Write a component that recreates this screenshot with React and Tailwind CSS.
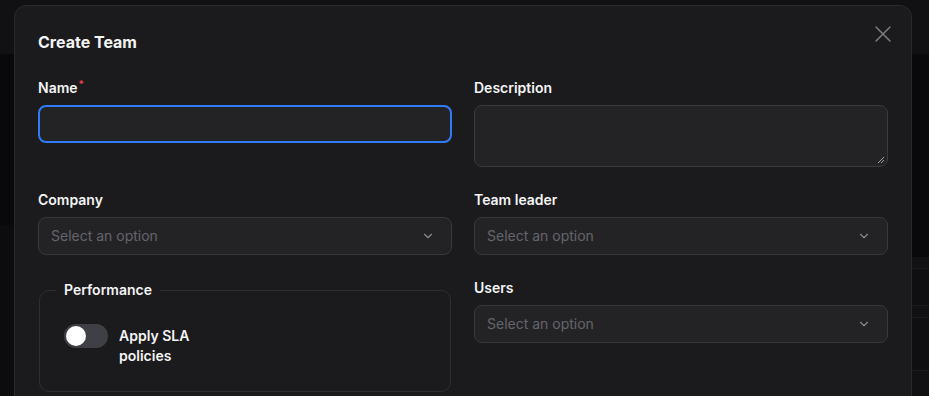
import React from "react";

function Chevron() {
  return (
    <svg width="14" height="14" viewBox="0 0 24 24" fill="none" stroke="#8a8a91" strokeWidth="2" strokeLinecap="round" strokeLinejoin="round">
      <path d="m6 9 6 6 6-6" />
    </svg>
  );
}

function Select() {
  return (
    <div className="flex h-[38px] items-center justify-between rounded-lg border border-[#38383d] bg-[#232326] pl-3 pr-4">
      <span className="text-sm text-[#65656c]">Select an option</span>
      <Chevron />
    </div>
  );
}

function Label({ children, required }) {
  return (
    <div className="mb-[7px] h-5 text-sm font-semibold leading-5 text-[#f4f4f5]">
      {children}
      {required && <span className="relative -top-[5px] ml-[1px] text-[10px] text-[#ef4444]">*</span>}
    </div>
  );
}

export default function App() {
  return (
    <div className="relative h-[396px] w-[929px] overflow-hidden bg-[#0b0b0d]" style={{ fontFamily: "Inter, 'Noto Sans', sans-serif" }}>
      {/* background app */}
      <div className="flex h-full flex-col">
        <div className="h-[54px] bg-[#111113]" />
        <div className="flex flex-1">
          <div className="flex w-[14px] flex-col">
            <div className="h-[171px] bg-[#09090b]" />
            <div className="flex-1 bg-[#0c0c0e]" />
          </div>
          <div className="flex-1" />
          <div className="flex w-[20px] flex-col">
            <div className="h-[203px] bg-[#09090b]" />
            <div className="h-[11px] bg-[#111113]" />
            <div className="h-[37px] border-t border-[#1c1c1f] bg-[#0f0f11]" />
            <div className="h-[12px] border-t border-[#1c1c1f] bg-[#111113]" />
            <div className="h-[53px] border-t border-[#1c1c1f] bg-[#0f0f11]" />
            <div className="flex-1 border-t border-[#1c1c1f] bg-[#111113]" />
          </div>
        </div>
      </div>

      {/* modal */}
      <div className="absolute left-[14px] top-[5px] h-[420px] w-[898px] rounded-xl border border-[#2a2a2e] bg-[#1b1b1d] px-[23px] pt-6">
        <button className="absolute right-[14px] top-[14px] text-[#7c7c83]">
          <svg width="28" height="28" viewBox="0 0 28 28" fill="none" stroke="currentColor" strokeWidth="1.5" strokeLinecap="round">
            <path d="M21 7 7 21M7 7l14 14" />
          </svg>
        </button>
        <h2 className="mb-6 h-6 text-base font-bold leading-6 text-[#f4f4f5]">Create Team</h2>
        <div className="grid grid-cols-2 gap-x-[22px] gap-y-[23px]">
          <div>
            <Label required>Name</Label>
            <div className="h-[38px] rounded-lg border-2 border-[#2f7cf6] bg-[#232326]" />
          </div>
          <div>
            <Label>Description</Label>
            <div className="relative h-[62px] rounded-lg border border-[#3a3a3f] bg-[#232326]">
              <svg className="absolute bottom-[2px] right-[2px]" width="8" height="8" viewBox="0 0 8 8" stroke="#a1a1aa" strokeWidth="1">
                <path d="M1 7 7 1M4 7 7 4" />
              </svg>
            </div>
          </div>
          <div>
            <Label>Company</Label>
            <Select />
          </div>
          <div>
            <Label>Team leader</Label>
            <Select />
          </div>
          <fieldset className="mx-[1px] mt-[2px] rounded-[10px] border border-[#2f2f33] px-6 pb-[25px] pt-6">
            <legend className="-ml-2 px-2 text-sm font-semibold leading-5 text-[#f4f4f5]">Performance</legend>
            <div className="flex items-start gap-[11px]">
              <div className="flex h-6 w-11 items-center rounded-full bg-[#3f3f46] px-[2px]">
                <div className="h-5 w-5 rounded-full bg-white" />
              </div>
              <div className="w-[80px] pt-[2px] text-sm font-semibold leading-5 text-[#f4f4f5]">Apply SLA policies</div>
            </div>
          </fieldset>
          <div>
            <Label>Users</Label>
            <Select />
          </div>
        </div>
      </div>
    </div>
  );
}
